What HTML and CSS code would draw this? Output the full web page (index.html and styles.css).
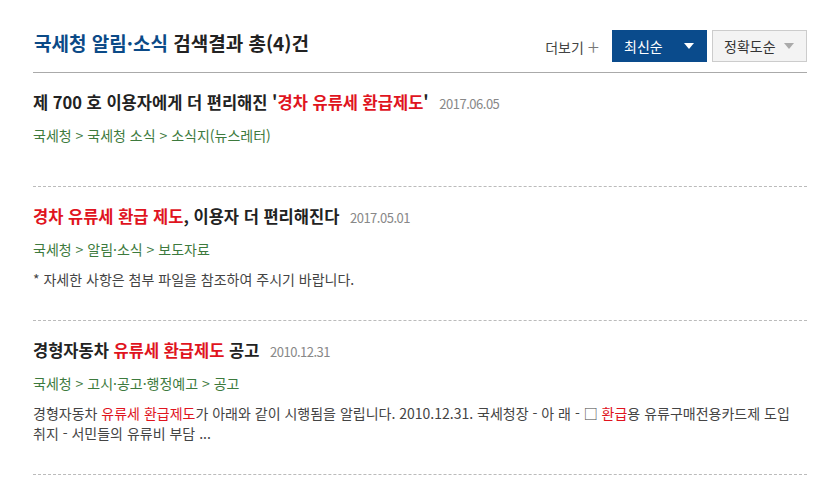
FILE: index.html
```html
<!DOCTYPE html>
<html lang="ko">
<head>
  <meta charset="UTF-8">
  <meta name="viewport" content="width=device-width, initial-scale=1.0">
  <title>검색결과 - 국세청 알림·소식</title>
  <link rel="stylesheet" href="styles.css">
</head>
<body>
  <main class="result-section">
    <!-- Section Header -->
    <div class="section-head">
      <h2 class="section-title"><span class="cat">국세청 알림·소식</span> 검색결과 총(4)건</h2>
      <div class="head-tools">
        <a class="more-link" href="#">더보기 <span class="plus">+</span></a>
        <button class="sort-btn active">최신순 <span class="caret"></span></button>
        <button class="sort-btn">정확도순 <span class="caret"></span></button>
      </div>
    </div>

    <!-- Result List -->
    <ul class="result-list">
      <li class="result-item">
        <div class="item-title">제 700 호 이용자에게 더 편리해진 '<em>경차 유류세 환급제도</em>' <span class="date">2017.06.05</span></div>
        <div class="path">국세청 &gt; 국세청 소식 &gt; 소식지(뉴스레터)</div>
        <div class="desc"></div>
      </li>
      <li class="result-item">
        <div class="item-title"><em>경차 유류세 환급 제도</em>, 이용자 더 편리해진다 <span class="date">2017.05.01</span></div>
        <div class="path">국세청 &gt; 알림·소식 &gt; 보도자료</div>
        <div class="desc">* 자세한 사항은 첨부 파일을 참조하여 주시기 바랍니다.</div>
      </li>
      <li class="result-item">
        <div class="item-title">경형자동차 <em>유류세 환급제도</em> 공고 <span class="date">2010.12.31</span></div>
        <div class="path">국세청 &gt; 고시·공고·행정예고 &gt; 공고</div>
        <div class="desc">경형자동차 <em>유류세 환급제도</em>가 아래와 같이 시행됨을 알립니다. 2010.12.31. 국세청장 - 아 래 - □ <em>환급</em>용 유류구매전용카드제 도입 취지 - 서민들의 유류비 부담 ...</div>
      </li>
    </ul>
  </main>
</body>
</html>
```

FILE: styles.css
```css
/* General Styles */
body {
  margin: 0;
  padding: 0;
  background-color: #fff;
  font-family: "Noto Sans CJK KR", "Noto Sans", sans-serif;
  color: #222;
}

.result-section {
  width: 774px;
  margin-left: 33px;
}

/* Header */
.section-head {
  display: flex;
  justify-content: space-between;
  padding: 30px 0 10px;
  border-bottom: 1px solid #aaa;
}

.section-title {
  align-self: flex-start;
  margin: -1px 0 0 1px;
  font-size: 19px;
  line-height: 28px;
  font-weight: bold;
  color: #222;
}

.section-title .cat {
  color: #0b4a87;
}

.head-tools {
  display: flex;
  align-items: center;
}

.more-link {
  font-size: 14px;
  color: #444;
  text-decoration: none;
  margin-right: 8px;
}

.more-link .plus {
  font-size: 21px;
  font-weight: 300;
  color: #777;
  vertical-align: -2px;
}

.sort-btn {
  width: 95px;
  height: 32px;
  padding: 0 0 0 11px;
  margin-left: 5px;
  display: flex;
  align-items: center;
  font-family: inherit;
  font-size: 14px;
  color: #333;
  background-color: #f3f3f3;
  border: 1px solid #ccc;
  cursor: pointer;
}

.sort-btn.active {
  background-color: #0a4b8c;
  border-color: #0a4b8c;
  color: #fff;
}

.caret {
  margin-left: auto;
  margin-right: 12px;
  width: 0;
  height: 0;
  border-left: 5px solid transparent;
  border-right: 5px solid transparent;
  border-top: 6px solid #aaa;
}

.sort-btn.active .caret {
  border-top-color: #fff;
}

/* Result List */
.result-list {
  list-style: none;
  margin: 0;
  padding: 0;
}

.result-item {
  padding: 18px 0 31px;
  border-bottom: 1px dashed #bbb;
}

.result-item em {
  font-style: normal;
  color: #e0141e;
}

.item-title {
  font-size: 16.5px;
  line-height: 22px;
  font-weight: bold;
  color: #222;
}

.item-title .date {
  margin-left: 6px;
  font-size: 13px;
  font-weight: normal;
  letter-spacing: -0.5px;
  color: #888;
}

.path {
  margin-top: 10px;
  font-size: 14px;
  line-height: 20px;
  color: #3d7a3d;
}

.desc {
  margin-top: 10px;
  font-size: 14px;
  line-height: 20px;
  color: #444;
  word-break: keep-all;
}
```
